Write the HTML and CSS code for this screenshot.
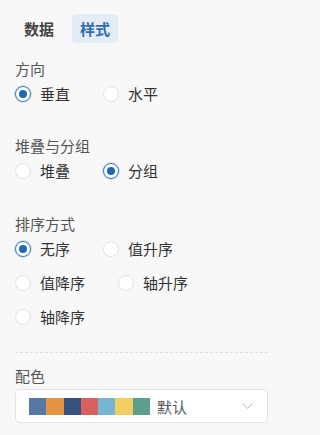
FILE: index.html
```html
<!DOCTYPE html>
<html lang="zh">
<head>
<meta charset="utf-8">
<link rel="stylesheet" href="styles.css">
</head>
<body>
<div class="panel">
  <div class="tabs">
    <div class="tab">数据</div>
    <div class="tab active">样式</div>
  </div>

  <div class="section s1">
    <div class="label">方向</div>
    <div class="row">
      <div class="opt"><span class="radio checked"></span>垂直</div>
      <div class="opt"><span class="radio"></span>水平</div>
    </div>
  </div>

  <div class="section s2">
    <div class="label">堆叠与分组</div>
    <div class="row">
      <div class="opt"><span class="radio"></span>堆叠</div>
      <div class="opt"><span class="radio checked"></span>分组</div>
    </div>
  </div>

  <div class="section s3">
    <div class="label">排序方式</div>
    <div class="row">
      <div class="opt"><span class="radio checked"></span>无序</div>
      <div class="opt"><span class="radio"></span>值升序</div>
    </div>
    <div class="row">
      <div class="opt"><span class="radio"></span>值降序</div>
      <div class="opt"><span class="radio"></span>轴升序</div>
    </div>
    <div class="row">
      <div class="opt"><span class="radio"></span>轴降序</div>
    </div>
  </div>

  <div class="divider"></div>

  <div class="section s4">
    <div class="label">配色</div>
    <div class="select">
      <div class="swatches">
        <span class="sw c1"></span><span class="sw c2"></span><span class="sw c3"></span><span class="sw c4"></span><span class="sw c5"></span><span class="sw c6"></span><span class="sw c7"></span>
      </div>
      <span class="select-text">默认</span>
      <svg class="chev" width="11" height="6" viewBox="0 0 11 6"><path d="M0.5 0.5 L5.5 5.3 L10.5 0.5" fill="none" stroke="#b8b8b8" stroke-width="1"/></svg>
    </div>
  </div>
</div>
</body>
</html>
```

FILE: styles.css
```css
html, body {
  margin: 0;
  padding: 0;
  background: #f8f8f9;
}
body {
  font-family: "Noto Sans CJK SC", "Noto Sans", sans-serif;
  width: 281px;
  height: 435px;
  overflow: hidden;
}
.panel {
  padding: 14px 13px 0 15px;
}
.tabs {
  display: flex;
  gap: 10px;
  padding-left: 1px;
}
.tab {
  height: 29px;
  line-height: 29px;
  padding: 0 8px;
  font-size: 15px;
  font-weight: 700;
  color: #444;
  border-radius: 4px;
}
.tab.active {
  background: #e4edf7;
  color: #2d6cb0;
}
.label {
  font-size: 15px;
  line-height: 20px;
  color: #555;
}
.s1 { margin-top: 16px; }
.s2 { margin-top: 32px; }
.s3 { margin-top: 33px; }
.s4 { margin-top: 13px; }
.row {
  display: flex;
  gap: 33px;
  height: 20px;
  margin-top: 5px;
}
.row + .row {
  margin-top: 14px;
}
.opt {
  display: flex;
  align-items: center;
  font-size: 15px;
  line-height: 20px;
  color: #333;
}
.radio {
  box-sizing: border-box;
  width: 16px;
  height: 16px;
  border-radius: 50%;
  border: 1px solid #e2e2e2;
  background: #fff;
  margin-right: 9px;
  position: relative;
}
.radio.checked {
  border-color: #3a78bb;
  box-shadow: 0 0 0 1px #cfe0f1;
}
.radio.checked::after {
  content: "";
  position: absolute;
  left: 3px;
  top: 3px;
  width: 8px;
  height: 8px;
  border-radius: 50%;
  background: #1f69b3;
}
.divider {
  margin-top: 25px;
  border-top: 1px dashed #dedede;
}
.select {
  margin-top: 3px;
  box-sizing: border-box;
  height: 34px;
  border: 1px solid #e3e3e3;
  border-radius: 4px;
  background: #fff;
  display: flex;
  align-items: center;
  padding: 0 14px 0 13px;
}
.swatches {
  display: flex;
  width: 121px;
  height: 17px;
}
.sw { flex: 1; }
.c1 { background: #5778a4; }
.c2 { background: #e49444; }
.c3 { background: #36527f; }
.c4 { background: #d8605f; }
.c5 { background: #77b6d2; }
.c6 { background: #f2cd5f; }
.c7 { background: #5c9f8b; }
.select-text {
  margin-left: 7px;
  font-size: 15px;
  color: #555;
  flex: 1;
}
.chev {
  display: block;
}
```
